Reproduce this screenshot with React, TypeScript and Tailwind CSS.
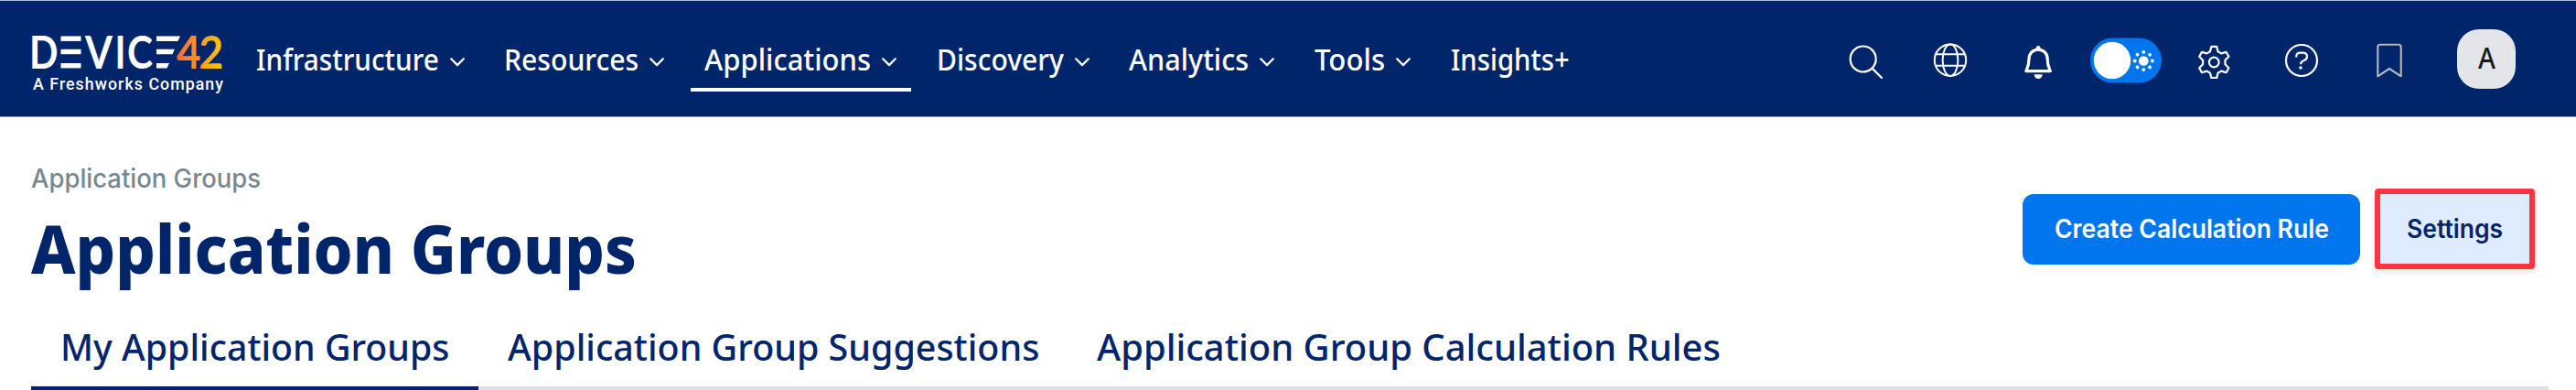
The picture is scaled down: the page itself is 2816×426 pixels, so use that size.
import { useLayoutEffect, useRef, useState } from "react";
import type { ReactNode } from "react";

/** A line of text condensed or widened to exactly `width` pixels. */
function FitText({ width, children, className = "" }: { width: number; children: ReactNode; className?: string }) {
  const ref = useRef<HTMLSpanElement>(null);
  const [scale, setScale] = useState(1);
  useLayoutEffect(() => {
    const measure = () => {
      if (ref.current) setScale(width / ref.current.offsetWidth);
    };
    measure();
    document.fonts.ready.then(measure);
  }, [width]);
  return (
    <span className={`block shrink-0 whitespace-nowrap ${className}`} style={{ width }}>
      <span ref={ref} className="inline-block origin-left" style={{ transform: `scaleX(${scale})` }}>
        {children}
      </span>
    </span>
  );
}

function Logo() {
  return (
    <svg width="232" height="100" viewBox="24 18 232 100" className="shrink-0">
      <defs>
        <linearGradient id="amber" gradientUnits="userSpaceOnUse" x1="193" y1="0" x2="243" y2="0">
          <stop offset="0" stopColor="#f26a36" />
          <stop offset="0.5" stopColor="#fa9a1e" />
          <stop offset="1" stopColor="#ffc60a" />
        </linearGradient>
      </defs>
      <g fill="#fff" fontFamily="Lato, sans-serif" fontWeight="700" fontSize="49.5">
        <text x="32" y="74.5" textLength="31.5" lengthAdjust="spacingAndGlyphs">D</text>
        <text x="93" y="74.5" textLength="30" lengthAdjust="spacingAndGlyphs">V</text>
        <text x="125.5" y="74.5" textLength="12" lengthAdjust="spacingAndGlyphs">I</text>
        <text x="139" y="74.5" textLength="28" lengthAdjust="spacingAndGlyphs">C</text>
      </g>
      <g fill="#fff">
        <rect x="66.5" y="39.5" width="22" height="5.4" />
        <rect x="66.5" y="53.8" width="22" height="5.4" />
        <rect x="66.5" y="69" width="22" height="5.4" />
        <path d="M171 39.5H197L194.5 44.9H171zM171 53.8H191L188.5 59.2H171zM171 69H185L182.5 74.4H171z" />
      </g>
      <g fill="url(#amber)" fontFamily="Lato, sans-serif" fontWeight="700" fontSize="49.5">
        <text x="193" y="74.5" textLength="26.5" lengthAdjust="spacingAndGlyphs">4</text>
        <text x="217.5" y="74.5" textLength="27" lengthAdjust="spacingAndGlyphs">2</text>
      </g>
      <text x="36" y="98" fill="#fff" fontFamily="Roboto, sans-serif" fontWeight="500" fontSize="17.8" textLength="208">
        A Freshworks Company
      </text>
    </svg>
  );
}

function Chevron() {
  return (
    <svg width="16" height="10" viewBox="0 0 16 10" className="mt-[6px] shrink-0" fill="none" stroke="#fff" strokeWidth="2.2">
      <path d="M1.2 1.3L8 8.1L14.8 1.3" strokeLinecap="round" strokeLinejoin="round" />
    </svg>
  );
}

const NAV = [
  { label: "Infrastructure", text: 200, box: "w-[271px]", menu: true },
  { label: "Resources", text: 147, box: "w-[219px]", menu: true },
  { label: "Applications", text: 182, box: "w-[254px]", menu: true, active: true },
  { label: "Discovery", text: 139, box: "w-[210px]", menu: true },
  { label: "Analytics", text: 131, box: "w-[203px]", menu: true },
  { label: "Tools", text: 77, box: "w-[149px]", menu: true },
  { label: "Insights+", text: 130, box: "w-[162px]", menu: false },
];

function NavItem({ item }: { item: (typeof NAV)[number] }) {
  return (
    <a className={`flex h-[67px] shrink-0 flex-col ${item.box}`}>
      <span className="flex h-[63px] items-center gap-[12px] pl-[15px]">
        <FitText width={item.text}>{item.label}</FitText>
        {item.menu && <Chevron />}
      </span>
      {item.active && <span className="h-[4px] w-[241px] bg-white" />}
    </a>
  );
}

const SUN_DOTS = [0, 45, 90, 135, 180, 225, 270, 315];

function Icons() {
  return (
    <div className="flex shrink-0 items-center">
      <svg width="40" height="40" viewBox="0 0 40 40" className="mt-[4px]" fill="none" stroke="#fff" strokeWidth="2.2">
        <circle cx="16.7" cy="18.5" r="14" />
        <path d="M26.6 28.6L37 39" strokeLinecap="round" />
      </svg>
      <svg width="40" height="40" viewBox="0 0 40 40" className="mt-[4px] ml-[52px]" fill="none" stroke="#fff" strokeWidth="2">
        <circle cx="20" cy="19.7" r="17.2" />
        <ellipse cx="20" cy="19.7" rx="8.4" ry="17.2" />
        <path d="M4 13.3H36M4 25.8H36" />
      </svg>
      <svg width="40" height="40" viewBox="0 0 40 40" className="mt-[4px] ml-[56px]" fill="none" stroke="#fff">
        <path
          d="M20 8.2C13.8 8.2 10 12.8 10 18.5C10 25.5 8.6 27.5 6.8 31.6H33.4C31.6 27.5 30.2 25.5 30.2 18.5C30.2 12.8 26.2 8.2 20 8.2Z"
          strokeWidth="3.2"
          strokeLinejoin="round"
        />
        <path d="M20.2 4C21.6 4 22.5 5 22.5 6.4V8H17.9V6.4C17.9 5 18.8 4 20.2 4ZM15.7 35.3H24.7C24.7 38.2 22.6 40 20.2 40S15.7 38.2 15.7 35.3Z" fill="#fff" stroke="none" />
      </svg>
      <svg width="78" height="50" viewBox="0 0 78 50" className="mt-[3px] ml-[37px]">
        <rect y="0.5" width="78" height="49" rx="24.5" fill="#0076ee" />
        <circle cx="24" cy="25" r="20.2" fill="#fff" />
        <circle cx="58.3" cy="25.5" r="5.3" fill="#fff" />
        {SUN_DOTS.map((a) => (
          <circle key={a} cx="67.9" cy="25.5" r="1.9" fill="#fff" transform={`rotate(${a} 58.3 25.5)`} />
        ))}
      </svg>
      <svg width="40" height="40" viewBox="0 0 40 40" className="mt-[4px] ml-[37px]" fill="none" stroke="#fff" strokeWidth="2.2" strokeLinejoin="round">
        <circle cx="20.3" cy="22" r="5.4" />
        <path d="M17.4 4.9H23.2L24.6 10.3L28.2 12.4L33.6 10.8L36.4 15.8L32.5 19.8V24.2L36.4 28.2L33.6 33.2L28.2 31.6L24.6 33.7L23.2 39.1H17.4L16 33.7L12.4 31.6L7 33.2L4.2 28.2L8.1 24.2V19.8L4.2 15.8L7 10.8L12.4 12.4L16 10.3Z" />
      </svg>
      <svg width="40" height="40" viewBox="0 0 40 40" className="mt-[4px] ml-[56px]" fill="none" stroke="#fff" strokeWidth="2.2">
        <circle cx="20" cy="20" r="17" />
        <path d="M14.3 16.6V15.4C14.3 12.9 16.3 11.6 18.6 11.6H21.2C24 11.6 26 13.2 26 15.7C26 18.1 24.4 19.3 22.6 20C20.3 20.9 19.1 21.6 19.1 24.3" />
        <circle cx="19" cy="28" r="1.8" fill="#fff" stroke="none" />
      </svg>
      <svg width="40" height="40" viewBox="0 0 40 40" className="mt-[4px] ml-[56px]" fill="none" stroke="#b3b6bd" strokeWidth="2.1" strokeLinejoin="round">
        <path d="M7.3 37.3V5.3C7.3 3.7 8.3 2.8 9.8 2.8H30.2C31.7 2.8 32.7 3.7 32.7 5.3V37.3L20 29Z" />
      </svg>
      <div className="ml-[54px] flex h-[65px] w-[64px] items-center justify-center rounded-[24px] bg-[#e4e5e9] pb-[2px] text-[#1a1a1a]">
        <FitText width={19}>A</FitText>
      </div>
    </div>
  );
}

export default function App() {
  return (
    <div className="flex h-[426px] w-[2816px] flex-col overflow-hidden bg-white font-['Noto_Sans',sans-serif] text-[#00256b]">
      <header className="flex h-[128px] shrink-0 items-center justify-between border-t border-b border-t-[#b4c1d6] border-b-[#8b98b8] bg-[#00256b] pr-[66px] pl-[24px] text-[32px] leading-[40px] font-medium text-white">
        <div className="flex items-center">
          <div className="mt-[8px]">
            <Logo />
          </div>
          <nav className="ml-[9px] flex pt-[5px]">
            {NAV.map((n) => (
              <NavItem key={n.label} item={n} />
            ))}
          </nav>
        </div>
        <Icons />
      </header>

      <section className="flex h-[206px] shrink-0 justify-between pr-[45px] pl-[34px]">
        <div className="flex flex-col">
          <FitText width={251} className="mt-[47px] h-[40px] font-[Inter,sans-serif] text-[28px] leading-[40px] font-medium text-[#788791]">
            Application Groups
          </FitText>
          <h1 className="mt-[6px] text-[74px] leading-[100px] font-extrabold">
            <FitText width={662}>Application Groups</FitText>
          </h1>
        </div>
        <div className="mt-[78px] flex h-[88px] items-center gap-[16px] font-[Inter,sans-serif] text-[28px] leading-[40px] font-semibold">
          <button className="flex h-[77px] w-[369px] items-center justify-center rounded-[12px] bg-[#0076ee] text-white">
            <FitText width={300}>Create Calculation Rule</FitText>
          </button>
          <button className="flex h-[88px] w-[175px] items-center justify-center rounded-[4px] border-[6px] border-[#fc3440] bg-[#dfebff] shadow-[0_3px_6px_rgba(0,0,0,0.12)]">
            <FitText width={105}>Settings</FitText>
          </button>
        </div>
      </section>

      <div className="flex h-[92px] pr-[30px] pl-[34px] text-[39px] leading-[60px] font-[550]">
        <div className="h-[92px] w-[489px] border-b-[4px] border-[#00256b] pt-[15px] pl-[32px]">
          <FitText width={425}>My Application Groups</FitText>
        </div>
        <div className="flex h-[92px] flex-1 border-b-[4px] border-[#dee1e7] pt-[15px] pl-[32px]">
          <FitText width={581}>Application Group Suggestions</FitText>
          <FitText width={682} className="ml-[63px]">Application Group Calculation Rules</FitText>
        </div>
      </div>
    </div>
  );
}
